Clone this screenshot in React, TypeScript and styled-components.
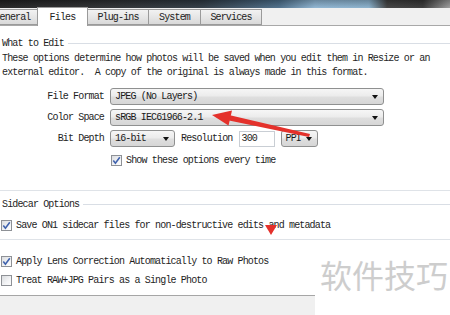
import styled, { createGlobalStyle } from "styled-components";

const GlobalStyle = createGlobalStyle`
  html, body {
    margin: 0;
    padding: 0;
    background: #fff;
  }
`;

const Page = styled.div`
  position: relative;
  width: 450px;
  height: 315px;
  overflow: hidden;
  background: #fff;
  display: flex;
  flex-direction: column;
  font-family: "Liberation Mono", "DejaVu Sans Mono", monospace;
  font-size: 10px;
  letter-spacing: -0.85px;
  color: #1e1e1e;
`;

const TitleBar = styled.div`
  height: 8px;
  flex: none;
  background:
    linear-gradient(to bottom, rgba(0, 0, 0, 0.25), rgba(255, 255, 255, 0.05)),
    linear-gradient(
      to right,
      #202020 0%,
      #2c2e31 25%,
      #2d3842 45%,
      #4a6c88 62%,
      #8db4d2 70%,
      #88b0cc 82%,
      #3e3e3e 86%,
      #353535 94%,
      #9c9c9c 100%
    );
`;

const TabStrip = styled.div`
  height: 18px;
  flex: none;
  display: flex;
  align-items: flex-end;
  background: #f0f0f0;
  border-bottom: 1px solid #a8a8a8;
  box-sizing: border-box;
`;

const TabList = styled.div`
  display: flex;
  align-items: flex-end;
  margin-left: -13px;
  height: 100%;
`;

const Tab = styled.div<{ $w: number; $active?: boolean }>`
  box-sizing: border-box;
  width: ${(p) => p.$w}px;
  height: ${(p) => (p.$active ? 19 : 16)}px;
  margin-bottom: ${(p) => (p.$active ? -1 : 0)}px;
  margin-right: -1px;
  display: flex;
  align-items: center;
  justify-content: center;
  border: 1px solid #9a9a9a;
  border-bottom: ${(p) => (p.$active ? "none" : "1px solid #9a9a9a")};
  background: ${(p) =>
    p.$active ? "#fff" : "linear-gradient(to bottom, #f2f2f2 0%, #e6e6e6 50%, #d9d9d9 100%)"};
  position: relative;
  z-index: ${(p) => (p.$active ? 1 : 0)};
  color: #222;
`;

const Content = styled.div`
  display: flex;
  flex-direction: column;
  flex: 1;
`;

const Heading = styled.div<{ $mt: number }>`
  display: flex;
  align-items: center;
  gap: 4px;
  height: 12px;
  margin-top: ${(p) => p.$mt}px;
  padding-left: 2px;

  &::after {
    content: "";
    flex: 1;
    height: 1px;
    background: #d9dee5;
  }
`;

const Desc = styled.div`
  margin-top: 3px;
  padding-left: 2px;
  line-height: 14px;
  white-space: pre;
  color: #262626;
`;

const Form = styled.div`
  margin-top: 8px;
  display: flex;
  flex-direction: column;
  gap: 4px;
`;

const FieldRow = styled.div`
  display: flex;
  align-items: center;
  gap: 6px;
`;

const Label = styled.div`
  width: 104px;
  text-align: right;
`;

const Inline = styled.div`
  display: flex;
  align-items: center;
  gap: 6px;
`;

const Select = styled.div<{ $w: number }>`
  box-sizing: border-box;
  width: ${(p) => p.$w}px;
  height: 17px;
  display: flex;
  align-items: center;
  justify-content: space-between;
  padding: 0 5px 0 4px;
  border: 1px solid #8f9090;
  border-radius: 3px;
  background: linear-gradient(to bottom, #f6f6f6 0%, #ececec 45%, #dedede 55%, #d6d6d6 100%);
  color: #1a1a1a;
`;

const Caret = styled.span`
  width: 0;
  height: 0;
  border-left: 3.5px solid transparent;
  border-right: 3.5px solid transparent;
  border-top: 4px solid #111;
  margin-top: 1px;
`;

const NumberInput = styled.div`
  box-sizing: border-box;
  width: 36px;
  height: 16px;
  display: flex;
  align-items: center;
  padding-left: 2px;
  border: 1px solid #c9ced4;
  background: #fff;
`;

const CheckRow = styled.div<{ $mt: number; $indent?: number }>`
  display: flex;
  align-items: center;
  gap: 4px;
  height: 12px;
  margin-top: ${(p) => p.$mt}px;
  padding-left: ${(p) => p.$indent ?? 1}px;
`;

const Box = styled.span`
  box-sizing: border-box;
  width: 11px;
  height: 11px;
  flex: none;
  display: flex;
  align-items: center;
  justify-content: center;
  border: 1px solid #8e9196;
  background: linear-gradient(135deg, #dadcdf 0%, #f3f4f6 60%, #fdfdfd 100%);
`;

const Separator = styled.div<{ $mt: number }>`
  height: 1px;
  margin-top: ${(p) => p.$mt}px;
  background: #dfe3e8;
`;

const Footer = styled.div`
  margin-top: 9px;
  width: 315px;
  flex: 1;
  background: #f0f0f0;
  border-top: 1px solid #a6a6a6;
`;

const Watermark = styled.div`
  position: absolute;
  left: 320px;
  top: 258px;
  font-family: "Noto Sans CJK SC", "Noto Sans", sans-serif;
  font-size: 32px;
  line-height: 1;
  letter-spacing: 0;
  color: #cdcdcd;
`;

const Annotations = styled.svg`
  position: absolute;
  left: 0;
  top: 0;
  pointer-events: none;
`;

const Check = ({ checked }: { checked: boolean }) => (
  <Box>
    {checked && (
      <svg width="9" height="9" viewBox="0 0 9 9">
        <path d="M1.3 4.6 L3.4 7.2 L7.8 1.2" fill="none" stroke="#3f62ad" strokeWidth="1.6" />
      </svg>
    )}
  </Box>
);

const tabs = [
  { label: "General", w: 51 },
  { label: "Files", w: 51, active: true },
  { label: "Plug-ins", w: 62 },
  { label: "System", w: 53 },
  { label: "Services", w: 62 },
];

export default function App() {
  return (
    <>
      <GlobalStyle />
      <Page>
        <TitleBar />
        <TabStrip>
          <TabList>
            {tabs.map((t) => (
              <Tab key={t.label} $w={t.w} $active={t.active}>
                {t.label}
              </Tab>
            ))}
          </TabList>
        </TabStrip>
        <Content>
          <Heading $mt={11}>What to Edit</Heading>
          <Desc>
            {"These options determine how photos will be saved when you edit them in Resize or an\nexternal editor.  A copy of the original is always made in this format."}
          </Desc>
          <Form>
            <FieldRow>
              <Label>File Format</Label>
              <Select $w={274}>
                JPEG (No Layers)
                <Caret />
              </Select>
            </FieldRow>
            <FieldRow>
              <Label>Color Space</Label>
              <Select $w={274}>
                sRGB IEC61966-2.1
                <Caret />
              </Select>
            </FieldRow>
            <FieldRow>
              <Label>Bit Depth</Label>
              <Inline>
                <Select $w={65}>
                  16-bit
                  <Caret />
                </Select>
                <span>Resolution</span>
                <NumberInput>300</NumberInput>
                <Select $w={37}>
                  PPI
                  <Caret />
                </Select>
              </Inline>
            </FieldRow>
          </Form>
          <CheckRow $mt={7} $indent={111}>
            <Check checked />
            Show these options every time
          </CheckRow>
          <Separator $mt={24} />
          <Heading $mt={7}>Sidecar Options</Heading>
          <CheckRow $mt={9}>
            <Check checked />
            Save ON1 sidecar files for non-destructive edits and metadata
          </CheckRow>
          <Separator $mt={8} />
          <CheckRow $mt={15}>
            <Check checked />
            Apply Lens Correction Automatically to Raw Photos
          </CheckRow>
          <CheckRow $mt={7}>
            <Check checked={false} />
            Treat RAW+JPG Pairs as a Single Photo
          </CheckRow>
          <Footer />
        </Content>
        <Watermark>软件技巧</Watermark>
        <Annotations width="450" height="315" viewBox="0 0 450 315">
          <polygon points="309,137 229,120.5 230,115.3 310,134" fill="#e4312b" />
          <polygon points="212,115 232,110.5 228.5,125.5" fill="#e4312b" />
          <polygon points="265,225 277,225 271,235" fill="#e4312b" />
        </Annotations>
      </Page>
    </>
  );
}
